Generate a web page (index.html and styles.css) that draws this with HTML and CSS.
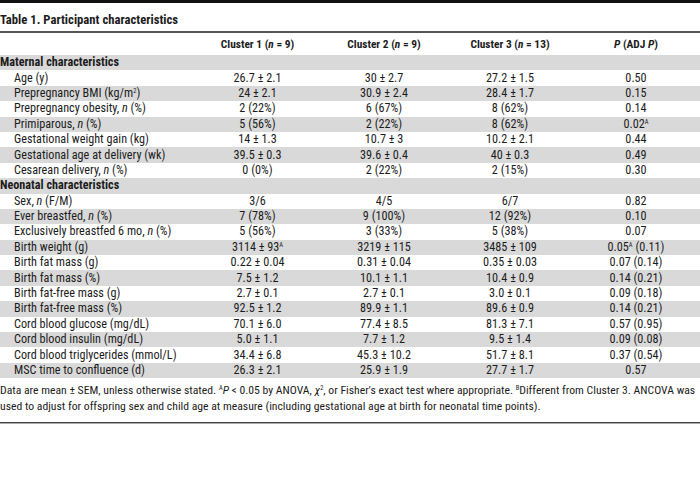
FILE: index.html
```html
<!DOCTYPE html>
<html lang="en">

<head>
    <meta charset="UTF-8">
    <meta name="viewport" content="width=device-width, initial-scale=1.0">
    <title>Table 1. Participant characteristics</title>
    <link rel="stylesheet" href="styles.css">
</head>

<body>
    <div class="topo"></div>
    <h1 class="titulo">Table 1. Participant characteristics</h1>
    <div class="tabela">
        <div class="linha cabecalho">
            <div></div>
            <div>Cluster 1 (<i>n</i> = 9)</div>
            <div>Cluster 2 (<i>n</i> = 9)</div>
            <div>Cluster 3 (<i>n</i> = 13)</div>
            <div><i>P</i> (ADJ <i>P</i>)</div>
        </div>
        <div class="linha cinza secao"><div>Maternal characteristics</div></div>
        <div class="linha"><div>Age (y)</div><div>26.7 ± 2.1</div><div>30 ± 2.7</div><div>27.2 ± 1.5</div><div>0.50</div></div>
        <div class="linha cinza"><div>Prepregnancy BMI (kg/m<sup>2</sup>)</div><div>24 ± 2.1</div><div>30.9 ± 2.4</div><div>28.4 ± 1.7</div><div>0.15</div></div>
        <div class="linha"><div>Prepregnancy obesity, <i>n</i> (%)</div><div>2 (22%)</div><div>6 (67%)</div><div>8 (62%)</div><div>0.14</div></div>
        <div class="linha cinza"><div>Primiparous, <i>n</i> (%)</div><div>5 (56%)</div><div>2 (22%)</div><div>8 (62%)</div><div>0.02<sup>A</sup></div></div>
        <div class="linha"><div>Gestational weight gain (kg)</div><div>14 ± 1.3</div><div>10.7 ± 3</div><div>10.2 ± 2.1</div><div>0.44</div></div>
        <div class="linha cinza"><div>Gestational age at delivery (wk)</div><div>39.5 ± 0.3</div><div>39.6 ± 0.4</div><div>40 ± 0.3</div><div>0.49</div></div>
        <div class="linha"><div>Cesarean delivery, <i>n</i> (%)</div><div>0 (0%)</div><div>2 (22%)</div><div>2 (15%)</div><div>0.30</div></div>
        <div class="linha cinza secao"><div>Neonatal characteristics</div></div>
        <div class="linha"><div>Sex, <i>n</i> (F/M)</div><div>3/6</div><div>4/5</div><div>6/7</div><div>0.82</div></div>
        <div class="linha cinza"><div>Ever breastfed, <i>n</i> (%)</div><div>7 (78%)</div><div>9 (100%)</div><div>12 (92%)</div><div>0.10</div></div>
        <div class="linha"><div>Exclusively breastfed 6 mo, <i>n</i> (%)</div><div>5 (56%)</div><div>3 (33%)</div><div>5 (38%)</div><div>0.07</div></div>
        <div class="linha cinza"><div>Birth weight (g)</div><div>3114 ± 93<sup>A</sup></div><div>3219 ± 115</div><div>3485 ± 109</div><div>0.05<sup>A</sup> (0.11)</div></div>
        <div class="linha"><div>Birth fat mass (g)</div><div>0.22 ± 0.04</div><div>0.31 ± 0.04</div><div>0.35 ± 0.03</div><div>0.07 (0.14)</div></div>
        <div class="linha cinza"><div>Birth fat mass (%)</div><div>7.5 ± 1.2</div><div>10.1 ± 1.1</div><div>10.4 ± 0.9</div><div>0.14 (0.21)</div></div>
        <div class="linha"><div>Birth fat-free mass (g)</div><div>2.7 ± 0.1</div><div>2.7 ± 0.1</div><div>3.0 ± 0.1</div><div>0.09 (0.18)</div></div>
        <div class="linha cinza"><div>Birth fat-free mass (%)</div><div>92.5 ± 1.2</div><div>89.9 ± 1.1</div><div>89.6 ± 0.9</div><div>0.14 (0.21)</div></div>
        <div class="linha"><div>Cord blood glucose (mg/dL)</div><div>70.1 ± 6.0</div><div>77.4 ± 8.5</div><div>81.3 ± 7.1</div><div>0.57 (0.95)</div></div>
        <div class="linha cinza"><div>Cord blood insulin (mg/dL)</div><div>5.0 ± 1.1</div><div>7.7 ± 1.2</div><div>9.5 ± 1.4</div><div>0.09 (0.08)</div></div>
        <div class="linha"><div>Cord blood triglycerides (mmol/L)</div><div>34.4 ± 6.8</div><div>45.3 ± 10.2</div><div>51.7 ± 8.1</div><div>0.37 (0.54)</div></div>
        <div class="linha cinza"><div>MSC time to confluence (d)</div><div>26.3 ± 2.1</div><div>25.9 ± 1.9</div><div>27.7 ± 1.7</div><div>0.57</div></div>
    </div>
    <p class="notas">
        Data are mean ± SEM, unless otherwise stated. <sup>A</sup><i>P</i> &lt; 0.05 by ANOVA, <i>χ</i><sup>2</sup>, or Fisher's exact test where appropriate. <sup>B</sup>Different from Cluster 3. ANCOVA was<br>
        used to adjust for offspring sex and child age at measure (including gestational age at birth for neonatal time points).
    </p>
    <div class="regua"></div>
</body>

</html>
```

FILE: styles.css
```css
* {
    margin: 0;
    padding: 0;
    box-sizing: border-box;
}

body {
    font-family: "Liberation Sans Narrow", "Roboto Condensed", Roboto, sans-serif;
    color: #1c1c1c;
    background: #fff;
    width: 700px;
}

.topo {
    height: 3px;
    background: #111;
}

.titulo {
    font-size: 12.7px;
    font-weight: bold;
    height: 30px;
    padding-top: 9px;
    border-bottom: 2px solid #555;
}

.tabela {
    font-size: 12.2px;
}

.linha {
    display: grid;
    grid-template-columns: 195px 125px 128px 124px 128px;
    align-items: center;
    height: 15.4px;
    line-height: 15px;
    text-align: center;
    white-space: nowrap;
}

.linha > div:first-child {
    text-align: left;
    padding-left: 14px;
}

.cabecalho {
    height: 22px;
    font-size: 11.4px;
    font-weight: bold;
}

.secao > div:first-child {
    grid-column: 1 / -1;
    padding-left: 0;
    font-weight: bold;
}

.cinza {
    background: #d9d9d9;
}

sup {
    font-size: 6.5px;
    vertical-align: 4px;
    line-height: 0;
}

.notas {
    font-size: 11.7px;
    line-height: 16px;
    padding-top: 4px;
    height: 44px;
    white-space: nowrap;
}

.regua {
    height: 2px;
    background: #444;
    border-bottom: 1px solid #aaa;
}
```
